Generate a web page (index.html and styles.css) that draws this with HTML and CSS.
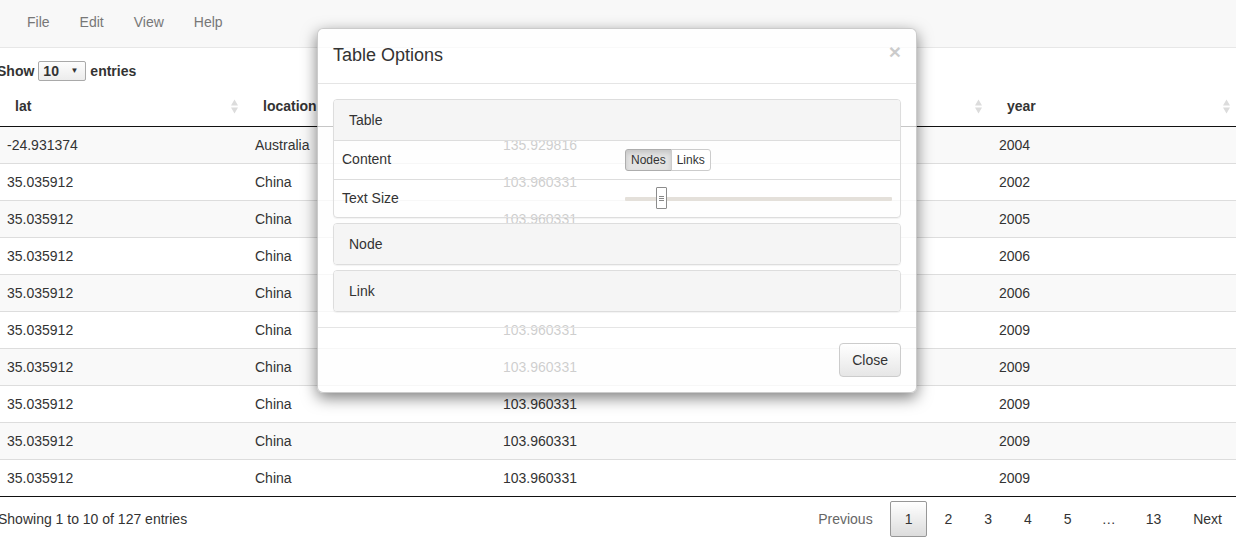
FILE: index.html
```html
<!DOCTYPE html>
<html>
<head>
<meta charset="utf-8">
<title>Table Options</title>
<link rel="stylesheet" href="styles.css">
</head>
<body>
<nav class="navbar">
  <ul class="menu">
    <li>File</li>
    <li>Edit</li>
    <li>View</li>
    <li>Help</li>
  </ul>
</nav>
<main class="wrap">
  <div class="length">Show <span class="select"><span>10</span><span class="caret">▼</span></span> entries</div>
  <table class="data">
    <colgroup><col><col><col><col><col></colgroup>
    <thead>
      <tr>
        <th><div class="th-in"><span>lat</span><svg class="sort" width="7" height="15" viewBox="0 0 7 15"><path d="M0 6.5 3.5 0.5 7 6.5Z M0 8.5 7 8.5 3.5 14.5Z"/></svg></div></th>
        <th><div class="th-in"><span>location</span><svg class="sort" width="7" height="15" viewBox="0 0 7 15"><path d="M0 6.5 3.5 0.5 7 6.5Z M0 8.5 7 8.5 3.5 14.5Z"/></svg></div></th>
        <th><div class="th-in"><span>lng</span><svg class="sort" width="7" height="15" viewBox="0 0 7 15"><path d="M0 6.5 3.5 0.5 7 6.5Z M0 8.5 7 8.5 3.5 14.5Z"/></svg></div></th>
        <th><div class="th-in"><span>id</span><svg class="sort" width="7" height="15" viewBox="0 0 7 15"><path d="M0 6.5 3.5 0.5 7 6.5Z M0 8.5 7 8.5 3.5 14.5Z"/></svg></div></th>
        <th><div class="th-in"><span>year</span><svg class="sort" width="7" height="15" viewBox="0 0 7 15"><path d="M0 6.5 3.5 0.5 7 6.5Z M0 8.5 7 8.5 3.5 14.5Z"/></svg></div></th>
      </tr>
    </thead>
    <tbody>
      <tr><td>-24.931374</td><td>Australia</td><td>135.929816</td><td></td><td>2004</td></tr>
      <tr><td>35.035912</td><td>China</td><td>103.960331</td><td></td><td>2002</td></tr>
      <tr><td>35.035912</td><td>China</td><td>103.960331</td><td></td><td>2005</td></tr>
      <tr><td>35.035912</td><td>China</td><td>103.960331</td><td></td><td>2006</td></tr>
      <tr><td>35.035912</td><td>China</td><td>103.960331</td><td></td><td>2006</td></tr>
      <tr><td>35.035912</td><td>China</td><td>103.960331</td><td></td><td>2009</td></tr>
      <tr><td>35.035912</td><td>China</td><td>103.960331</td><td></td><td>2009</td></tr>
      <tr><td>35.035912</td><td>China</td><td>103.960331</td><td></td><td>2009</td></tr>
      <tr><td>35.035912</td><td>China</td><td>103.960331</td><td></td><td>2009</td></tr>
      <tr><td>35.035912</td><td>China</td><td>103.960331</td><td></td><td>2009</td></tr>
    </tbody>
  </table>
  <div class="footer">
    <div class="info">Showing 1 to 10 of 127 entries</div>
    <div class="paging">
      <span class="pbtn disabled">Previous</span>
      <span class="pbtn current">1</span>
      <span class="pbtn">2</span>
      <span class="pbtn">3</span>
      <span class="pbtn">4</span>
      <span class="pbtn">5</span>
      <span class="ellipsis">…</span>
      <span class="pbtn">13</span>
      <span class="pbtn">Next</span>
    </div>
  </div>
</main>

<div class="modal">
  <div class="modal-header">
    <h4 class="modal-title">Table Options</h4>
    <span class="close">×</span>
  </div>
  <div class="modal-body">
    <div class="panel">
      <div class="panel-heading with-body">Table</div>
      <table class="opts">
        <colgroup><col class="lbl"><col></colgroup>
        <tr class="r1">
          <td>Content</td>
          <td><div class="btn-group"><span class="bx active">Nodes</span><span class="bx">Links</span></div></td>
        </tr>
        <tr class="r2">
          <td>Text Size</td>
          <td><div class="slider"><div class="track"></div><span class="handle"></span></div></td>
        </tr>
      </table>
    </div>
    <div class="panel">
      <div class="panel-heading">Node</div>
    </div>
    <div class="panel">
      <div class="panel-heading">Link</div>
    </div>
  </div>
  <div class="modal-footer">
    <span class="btn">Close</span>
  </div>
</div>
</body>
</html>
```

FILE: styles.css
```css
* { box-sizing: border-box; }
html, body { margin: 0; padding: 0; }
body {
  font-family: "Liberation Sans", Arial, sans-serif;
  font-size: 14px;
  line-height: 20px;
  color: #333;
  background: #fff;
  overflow: hidden;
  width: 1236px;
  height: 545px;
  position: relative;
}

/* navbar */
.navbar {
  height: 48px;
  background: #f8f8f8;
  border-bottom: 1px solid #e7e7e7;
}
.menu {
  list-style: none;
  margin: 0;
  padding: 0 0 0 12px;
  display: flex;
}
.menu li {
  padding: 12px 15px;
  color: #777;
  line-height: 20px;
}

/* table wrapper */
.wrap {
  margin-left: -3px;
  width: 1240px;
}
.length {
  margin-top: 13px;
  height: 20px;
  line-height: 20px;
  font-weight: bold;
  display: flex;
  align-items: center;
  padding-left: 0;
}
.select {
  display: inline-flex;
  align-items: center;
  justify-content: space-between;
  width: 48px;
  height: 20px;
  margin: 0 4px;
  padding: 0 7px 0 4px;
  border: 1px solid #a9a9a9;
  border-radius: 2px;
  background: linear-gradient(#fdfdfd, #ececec);
  font-weight: bold;
}
.caret {
  font-size: 8px;
  line-height: 8px;
  color: #333;
}

.data {
  margin-top: 5px;
  width: 1240px;
  table-layout: fixed;
  border-collapse: separate;
  border-spacing: 0;
}
.data col { width: 248px; }
.data th {
  padding: 10px 7px 10px 18px;
  text-align: left;
  font-weight: bold;
  border-bottom: 1px solid #111;
  line-height: 20px;
  height: 41px;
}
.th-in {
  display: flex;
  justify-content: space-between;
  align-items: center;
}
.sort { fill: #dcdcdc; display: block; }
.data td {
  padding: 8px 10px;
  line-height: 20px;
  height: 37px;
  border-top: 1px solid #ddd;
  white-space: nowrap;
}
.data tbody tr:first-child td { border-top: none; height: 36px; }
.data tbody tr:nth-child(odd) td { background: #f9f9f9; }
.data tbody tr:last-child td { border-bottom: 1px solid #111; height: 38px; }

.footer {
  margin-top: 4px;
  display: flex;
  justify-content: space-between;
  align-items: center;
}
.info { padding-left: 1px; margin-top: -1px; }
.paging { display: flex; align-items: center; }
.pbtn {
  display: inline-block;
  padding: 7px 14px;
  margin-left: 2px;
  border: 1px solid transparent;
  border-radius: 2px;
  line-height: 20px;
  color: #333;
}
.pbtn.disabled { color: #666; }
.pbtn.current {
  border: 1px solid #979797;
  background: linear-gradient(#fff, #dcdcdc);
}
.ellipsis { padding: 0 13px; margin-left: 2px; }

/* modal */
.modal {
  position: absolute;
  left: 317px;
  top: 28px;
  width: 600px;
  background: rgba(255, 255, 255, 0.76);
  border: 1px solid rgba(0, 0, 0, 0.2);
  border-radius: 6px;
  box-shadow: 0 5px 15px rgba(0, 0, 0, 0.5);
}
.modal-header {
  display: flex;
  justify-content: space-between;
  align-items: flex-start;
  padding: 14px 15px 15px;
  border-bottom: 1px solid #e5e5e5;
}
.modal-title {
  margin: 0;
  font-size: 18px;
  font-weight: normal;
  line-height: 25px;
}
.close {
  font-size: 21px;
  font-weight: bold;
  line-height: 21px;
  color: #000;
  opacity: 0.2;
  margin-top: -2px;
}
.modal-body { padding: 15px; }
.panel {
  border: 1px solid #ddd;
  border-radius: 4px;
  box-shadow: 0 1px 1px rgba(0, 0, 0, 0.05);
}
.panel + .panel { margin-top: 5px; }
.panel-heading {
  background: #f5f5f5;
  padding: 10px 15px;
  line-height: 20px;
  border-radius: 3px;
}
.panel-heading.with-body {
  border-bottom: 1px solid #ddd;
  border-radius: 3px 3px 0 0;
}
.opts {
  width: 100%;
  table-layout: fixed;
  border-collapse: separate;
  border-spacing: 0;
}
.opts col.lbl { width: 283px; }
.opts td {
  padding: 8px;
  vertical-align: top;
  line-height: 20px;
}
.opts .r2 td { border-top: 1px solid #ddd; }
.btn-group { display: flex; }
.bx {
  font-size: 12px;
  line-height: 18px;
  padding: 1px 5px;
  border: 1px solid #ccc;
  background: #fff;
  color: #333;
}
.bx:first-child { border-radius: 3px 0 0 3px; }
.bx:last-child { border-radius: 0 3px 3px 0; margin-left: -1px; }
.bx.active {
  background: #e3e3e3;
  border-color: #adadad;
  box-shadow: inset 0 3px 5px rgba(0, 0, 0, 0.125);
}
.slider {
  position: relative;
  height: 21px;
  display: flex;
  align-items: center;
}
.track {
  width: 100%;
  height: 4px;
  background: #e4e0da;
  border-radius: 1px;
}
.handle {
  position: absolute;
  left: 31px;
  top: -1px;
  width: 11px;
  height: 22px;
  background:
    linear-gradient(#888, #888) center 8px / 5px 1px no-repeat,
    linear-gradient(#888, #888) center 10px / 5px 1px no-repeat,
    linear-gradient(#888, #888) center 12px / 5px 1px no-repeat,
    #fff;
  border: 1px solid #8c8c8c;
  border-radius: 1px;
}
.modal-footer {
  padding: 15px;
  border-top: 1px solid #e5e5e5;
  display: flex;
  justify-content: flex-end;
}
.btn {
  display: inline-block;
  padding: 6px 12px;
  line-height: 20px;
  font-size: 14px;
  border: 1px solid #ccc;
  border-radius: 4px;
  background: linear-gradient(#fff, #e6e6e6);
  color: #333;
}
```
